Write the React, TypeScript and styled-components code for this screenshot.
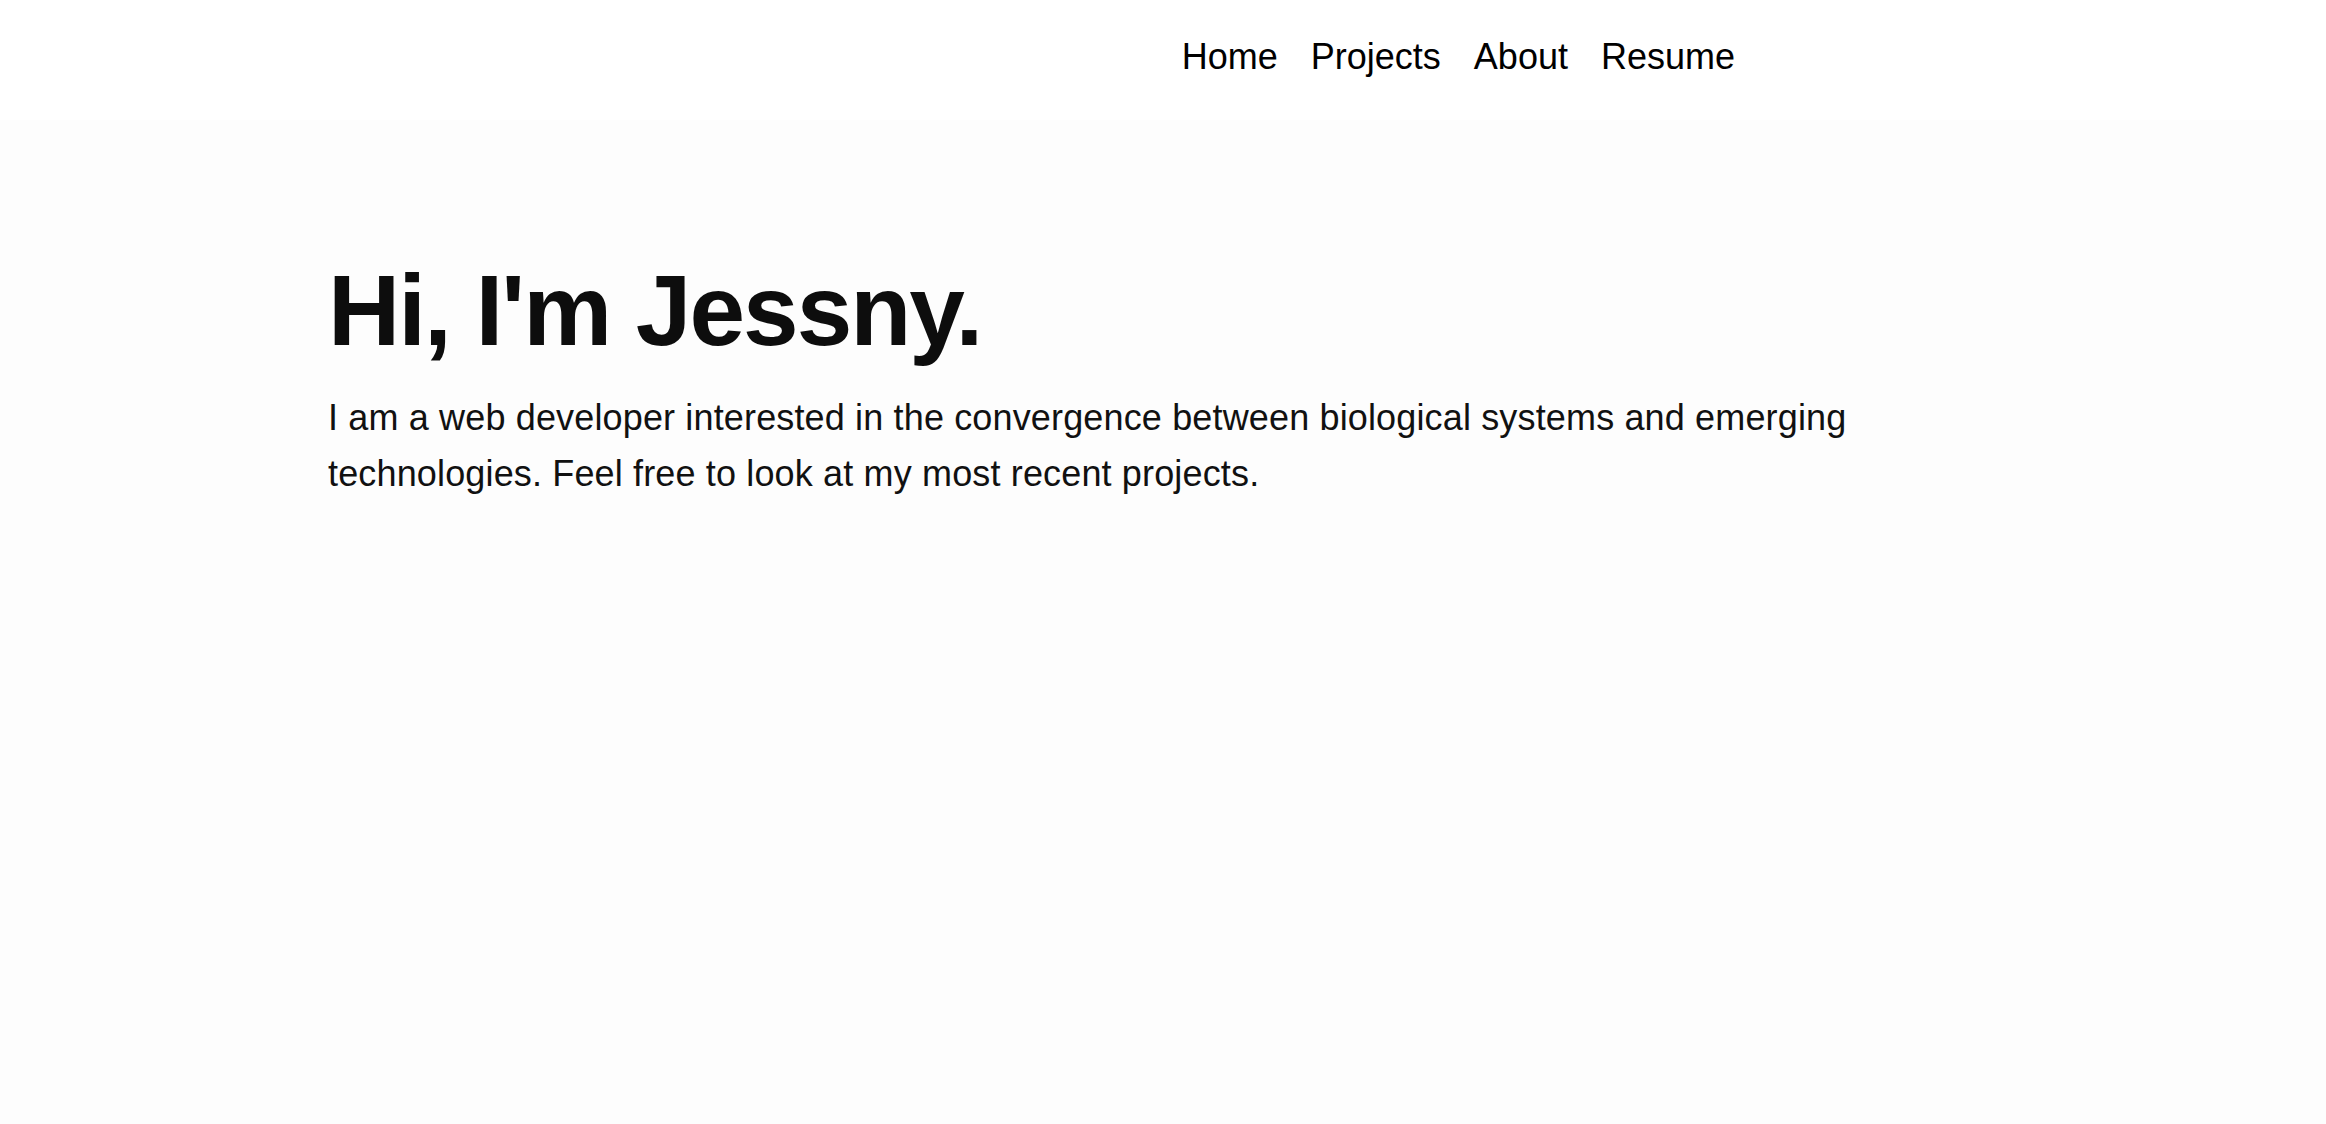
import React from "react";
import styled, { createGlobalStyle } from "styled-components";

const Global = createGlobalStyle`
  html, body {
    margin: 0;
    padding: 0;
    background: #fdfdfd;
    font-family: "Liberation Sans", Arial, Helvetica, sans-serif;
    color: #111;
  }
`;

const Header = styled.header`
  height: 120px;
  background: #ffffff;
  display: flex;
  justify-content: flex-end;
  align-items: flex-start;
  padding: 36px 591px 0 0;
  box-sizing: border-box;
`;

const Nav = styled.nav`
  display: flex;
  gap: 33px;
`;

const NavLink = styled.a`
  font-size: 36px;
  line-height: 42px;
  color: #000;
  text-decoration: none;
  cursor: pointer;
`;

const Main = styled.main`
  max-width: 1670px;
  margin: 0 auto;
  padding-top: 130px;
`;

const Title = styled.h1`
  margin: 0;
  font-size: 100px;
  line-height: 120px;
  font-weight: 700;
  letter-spacing: -2px;
  color: #0d0d0d;
`;

const Intro = styled.p`
  margin: 20px 0 0;
  max-width: 1560px;
  font-size: 36px;
  line-height: 56px;
  letter-spacing: 0.15px;
  color: #111;
`;

export default function App() {
  return (
    <>
      <Global />
      <Header>
        <Nav>
          {["Home", "Projects", "About", "Resume"].map((t) => (
            <NavLink key={t}>{t}</NavLink>
          ))}
        </Nav>
      </Header>
      <Main>
        <Title>Hi, I'm Jessny.</Title>
        <Intro>
          I am a web developer interested in the convergence between biological
          systems and emerging technologies. Feel free to look at my most recent
          projects.
        </Intro>
      </Main>
    </>
  );
}
